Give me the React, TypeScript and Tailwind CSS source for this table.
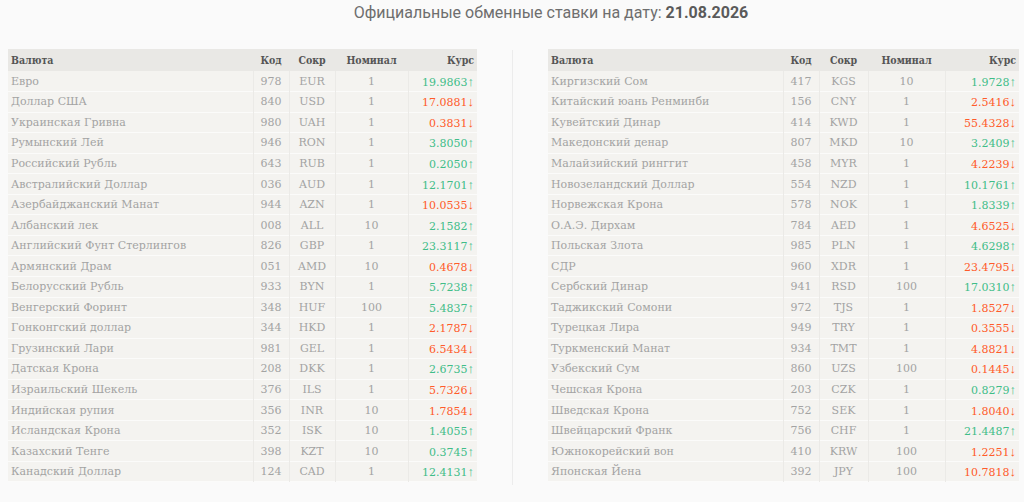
import React from "react";

type Row = [string, string, string, string, string, boolean];

const left: Row[] = [
  ["Евро", "978", "EUR", "1", "19.9863", true],
  ["Доллар США", "840", "USD", "1", "17.0881", false],
  ["Украинская Гривна", "980", "UAH", "1", "0.3831", false],
  ["Румынский Лей", "946", "RON", "1", "3.8050", true],
  ["Российский Рубль", "643", "RUB", "1", "0.2050", true],
  ["Австралийский Доллар", "036", "AUD", "1", "12.1701", true],
  ["Азербайджанский Манат", "944", "AZN", "1", "10.0535", false],
  ["Албанский лек", "008", "ALL", "10", "2.1582", true],
  ["Английский Фунт Стерлингов", "826", "GBP", "1", "23.3117", true],
  ["Армянский Драм", "051", "AMD", "10", "0.4678", false],
  ["Белорусский Рубль", "933", "BYN", "1", "5.7238", true],
  ["Венгерский Форинт", "348", "HUF", "100", "5.4837", true],
  ["Гонконгский доллар", "344", "HKD", "1", "2.1787", false],
  ["Грузинский Лари", "981", "GEL", "1", "6.5434", false],
  ["Датская Крона", "208", "DKK", "1", "2.6735", true],
  ["Израильский Шекель", "376", "ILS", "1", "5.7326", false],
  ["Индийская рупия", "356", "INR", "10", "1.7854", false],
  ["Исландская Крона", "352", "ISK", "10", "1.4055", true],
  ["Казахский Тенге", "398", "KZT", "10", "0.3745", true],
  ["Канадский Доллар", "124", "CAD", "1", "12.4131", true],
];

const right: Row[] = [
  ["Киргизский Сом", "417", "KGS", "10", "1.9728", true],
  ["Китайский юань Ренминби", "156", "CNY", "1", "2.5416", false],
  ["Кувейтский Динар", "414", "KWD", "1", "55.4328", false],
  ["Македонский денар", "807", "MKD", "10", "3.2409", true],
  ["Малайзийский ринггит", "458", "MYR", "1", "4.2239", false],
  ["Новозеландский Доллар", "554", "NZD", "1", "10.1761", true],
  ["Норвежская Крона", "578", "NOK", "1", "1.8339", true],
  ["О.А.Э. Дирхам", "784", "AED", "1", "4.6525", false],
  ["Польская Злота", "985", "PLN", "1", "4.6298", true],
  ["СДР", "960", "XDR", "1", "23.4795", false],
  ["Сербский Динар", "941", "RSD", "100", "17.0310", true],
  ["Таджикский Сомони", "972", "TJS", "1", "1.8527", false],
  ["Турецкая Лира", "949", "TRY", "1", "0.3555", false],
  ["Туркменский Манат", "934", "TMT", "1", "4.8821", false],
  ["Узбекский Сум", "860", "UZS", "100", "0.1445", false],
  ["Чешская Крона", "203", "CZK", "1", "0.8279", true],
  ["Шведская Крона", "752", "SEK", "1", "1.8040", false],
  ["Швейцарский Франк", "756", "CHF", "1", "21.4487", true],
  ["Южнокорейский вон", "410", "KRW", "100", "1.2251", false],
  ["Японская Йена", "392", "JPY", "100", "10.7818", false],
];

function RateTable({ rows, cols }: { rows: Row[]; cols: string[] }) {
  return (
    <table className="w-full border-collapse table-fixed text-[11px] leading-none font-['DejaVu_Serif',serif]">
      <colgroup>
        {cols.map((c, i) => (
          <col key={i} className={c} />
        ))}
      </colgroup>
      <thead>
        <tr className="bg-[#e9e8e5] text-[#555555] h-[22px] text-[10.5px] font-['DejaVu_Serif_Condensed','DejaVu_Serif',serif]">
          <th className="text-left pl-[3px] font-bold">Валюта</th>
          <th className="font-bold">Код</th>
          <th className="font-bold">Сокр</th>
          <th className="font-bold">Номинал</th>
          <th className="text-right pr-[3px] font-bold">Курс</th>
        </tr>
      </thead>
      <tbody>
        {rows.map((r, i) => (
          <tr key={i} className="bg-[#f4f3f0] text-[#a3a3a3] h-[20.55px] border-b border-[#fbfbfa]">
            <td className="pl-[3px] border-r border-[#ebeae7]">{r[0]}</td>
            <td className="text-center border-r border-[#ebeae7]">{r[1]}</td>
            <td className="text-center border-r border-[#ebeae7]">{r[2]}</td>
            <td className="text-center border-r border-[#ebeae7]">{r[3]}</td>
            <td className={`text-right pr-[3px] ${r[5] ? "text-[#3fbd88]" : "text-[#ff5b2a]"}`}>
              {r[4]}
              <span className="font-['Liberation_Sans',sans-serif] text-[13px] leading-none">{r[5] ? "↑" : "↓"}</span>
            </td>
          </tr>
        ))}
      </tbody>
    </table>
  );
}

export default function App() {
  return (
    <div className="w-[1024px] h-[502px] bg-[#fafafa] overflow-hidden">
      <h1 className="pt-[2px] pl-[78px] text-center text-[16px] text-[#6e6e6e] font-['Roboto',sans-serif] leading-[22px]">
        Официальные обменные ставки на дату: <span className="font-bold text-[#5a5a5a]">21.08.2026</span>
      </h1>

      <div className="flex mt-[25px] pl-2 pr-[5px]">
        <div className="w-[469px] shrink-0">
          <RateTable rows={left} cols={["w-[245px]", "w-[36px]", "w-[46px]", "w-[73px]", "w-[69px]"]} />
        </div>
        <div className="w-px bg-[#ececec] ml-[35px] mr-[35px] mt-px mb-[-3px]" />
        <div className="flex-1">
          <RateTable rows={right} cols={["w-[235px]", "w-[36px]", "w-[49px]", "w-[77px]", "w-[74px]"]} />
        </div>
      </div>
    </div>
  );
}
